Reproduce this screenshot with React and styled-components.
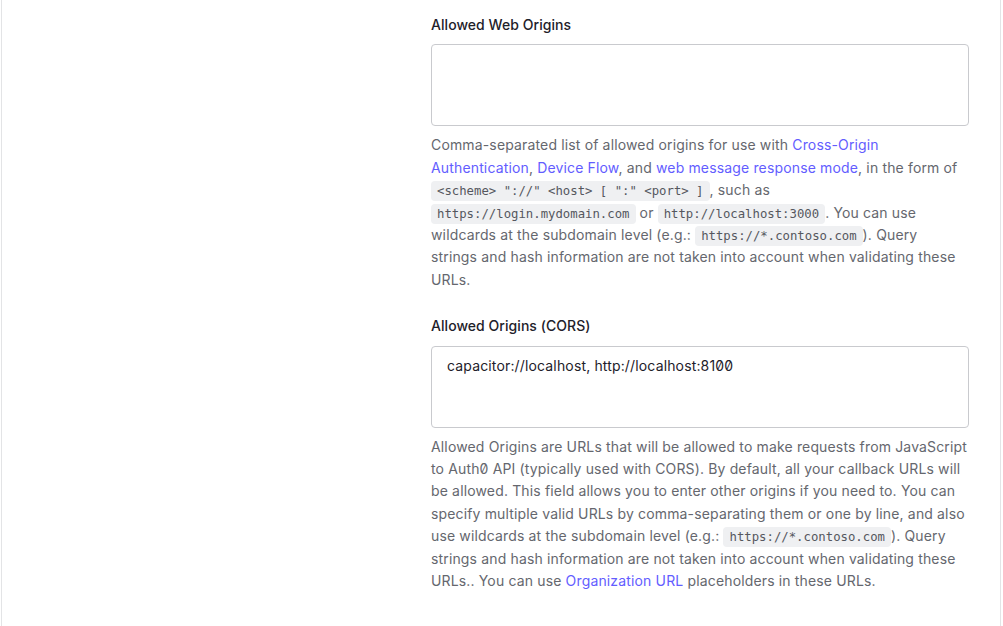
import React from "react";
import styled, { createGlobalStyle } from "styled-components";

const GlobalStyle = createGlobalStyle`
  html, body { margin: 0; padding: 0; background: #ffffff; }
  body {
    font-family: Inter, "Noto Sans", sans-serif;
    font-feature-settings: "zero" 1;
    -webkit-font-smoothing: antialiased;
  }
`;

const Page = styled.div`
  padding: 0 2px 0 1px;
  min-height: 100vh;
  box-sizing: border-box;
  display: flex;
`;

const Card = styled.section`
  flex: 1;
  border-left: 1px solid #e3e4e6;
  border-right: 1px solid #e3e4e6;
  background: #fff;
  display: grid;
  grid-template-columns: 1fr 538px;
  padding: 14px 31px 40px 32px;
`;

const Aside = styled.div``;

const Fields = styled.div`
  display: flex;
  flex-direction: column;
  gap: 24px;
`;

const Field = styled.div`
  display: flex;
  flex-direction: column;
`;

const Label = styled.label`
  font-size: 14px;
  line-height: 22.4px;
  font-weight: 500;
  letter-spacing: 0.05px;
  color: #1e212a;
  margin-bottom: 8px;
`;

const TextArea = styled.textarea`
  box-sizing: border-box;
  width: 100%;
  height: 82px;
  resize: none;
  border: 1px solid #c9cace;
  border-radius: 4px;
  padding: 8px 15px;
  font-family: Inter, "Noto Sans", sans-serif;
  font-feature-settings: "zero" 1;
  font-size: 14px;
  letter-spacing: 0.15px;
  line-height: 22px;
  color: #1e212a;
  background: #fff;
  outline: none;
  margin: 0;
`;

const Help = styled.p`
  margin: 8px 0 0;
  padding-right: 2px;
  font-size: 14px;
  line-height: 22.4px;
  letter-spacing: 0.15px;
  color: #65676e;
`;

const Link = styled.a`
  color: #635dff;
  text-decoration: none;
`;

const Code = styled.code`
  font-family: "DejaVu Sans Mono", "Liberation Mono", monospace;
  font-size: 12.3px;
  line-height: 1;
  letter-spacing: 0;
  background: #eff0f2;
  color: #55575e;
  border-radius: 4px;
  padding: 3px 6px;
`;

export default function App() {
  return (
    <>
      <GlobalStyle />
      <Page>
        <Card>
          <Aside />
          <Fields>
            <Field>
              <Label>Allowed Web Origins</Label>
              <TextArea defaultValue="" />
              <Help>
                Comma-separated list of allowed origins for use with{" "}
                <Link href="#">Cross-Origin Authentication</Link>,{" "}
                <Link href="#">Device Flow</Link>, and{" "}
                <Link href="#">web message response mode</Link>, in the form of{" "}
                <Code>{'<scheme> "://" <host> [ ":" <port> ]'}</Code>, such as{" "}
                <Code>https://login.mydomain.com</Code> or{" "}
                <Code>http://localhost:3000</Code>. You can use wildcards at the
                subdomain level (e.g.: <Code>https://*.contoso.com</Code>). Query
                strings and hash information are not taken into account when
                validating these URLs.
              </Help>
            </Field>
            <Field>
              <Label>Allowed Origins (CORS)</Label>
              <TextArea defaultValue="capacitor://localhost, http://localhost:8100" />
              <Help>
                Allowed Origins are URLs that will be allowed to make requests from
                JavaScript to Auth0 API (typically used with CORS). By default, all
                your callback URLs will be allowed. This field allows you to enter
                other origins if you need to. You can specify multiple valid URLs by
                comma-separating them or one by line, and also use wildcards at the
                subdomain level (e.g.: <Code>https://*.contoso.com</Code>). Query
                strings and hash information are not taken into account when
                validating these URLs.. You can use{" "}
                <Link href="#">Organization URL</Link> placeholders in these URLs.
              </Help>
            </Field>
          </Fields>
        </Card>
      </Page>
    </>
  );
}
